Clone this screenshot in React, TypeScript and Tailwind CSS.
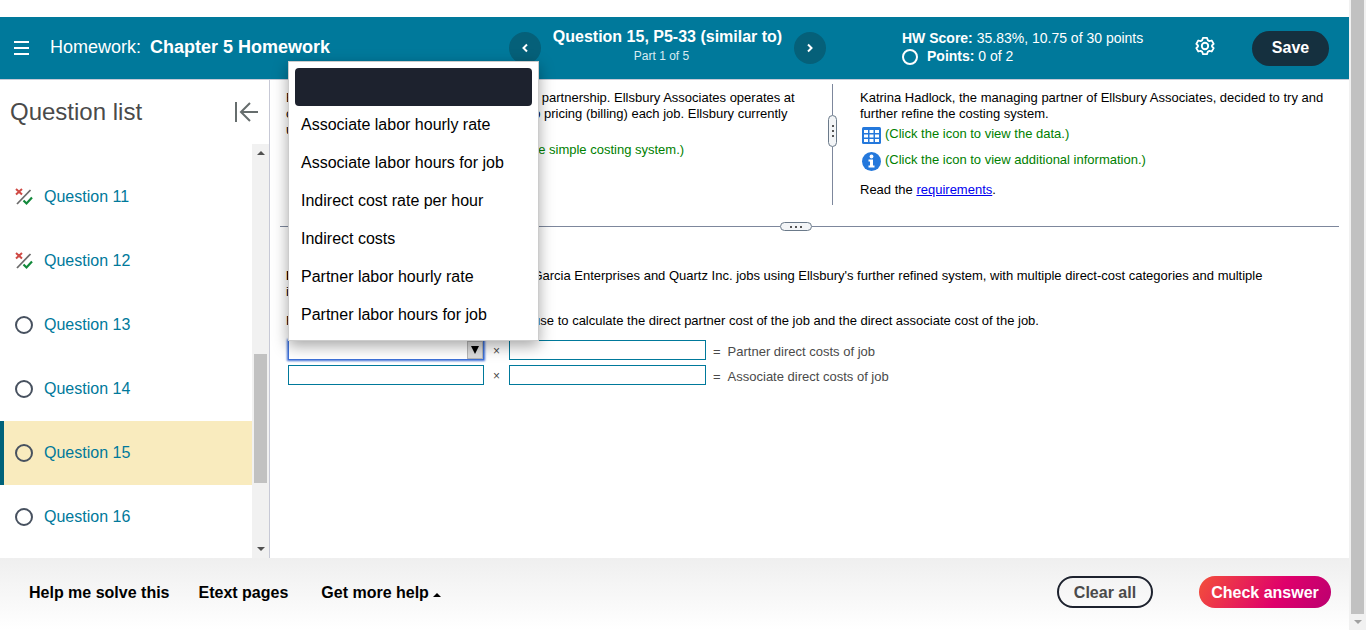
import { useState } from "react";
import type { ReactNode } from "react";

type Status = "mixed" | "open";

const questions: { id: number; status: Status }[] = [
  { id: 11, status: "mixed" },
  { id: 12, status: "mixed" },
  { id: 13, status: "open" },
  { id: 14, status: "open" },
  { id: 15, status: "open" },
  { id: 16, status: "open" },
];

const options = [
  "",
  "Associate labor hourly rate",
  "Associate labor hours for job",
  "Indirect cost rate per hour",
  "Indirect costs",
  "Partner labor hourly rate",
  "Partner labor hours for job",
];

function MixedIcon() {
  return (
    <svg width="18" height="18" viewBox="0 0 18 18" fill="none" aria-hidden="true">
      <path d="M2 16 15.500 2" stroke="#6b6b6b" strokeWidth="1.8" />
      <path d="M1 1l6 5.500M7 1 1 6.500" stroke="#cf4a45" strokeWidth="2" />
      <path d="M8.500 12.500l3 3 5.500-6" stroke="#12893b" strokeWidth="2.200" />
    </svg>
  );
}

function OpenIcon() {
  return (
    <svg width="18" height="18" viewBox="0 0 18 18" fill="none" aria-hidden="true">
      <circle cx="9" cy="9" r="8" stroke="#47515f" strokeWidth="2" />
    </svg>
  );
}

function GearIcon() {
  return (
    <svg width="20" height="20" viewBox="0 0 20 20" fill="none" stroke="#fff" aria-hidden="true">
      <path
        d="M8 1.800h4l.7 2.300 1.700 1 2.300-.6 2 3.400-1.700 1.600v1l1.700 1.600-2 3.400-2.300-.6-1.700 1-.7 2.300H8l-.7-2.300-1.700-1-2.300.6-2-3.400L3 10.500v-1L1.300 7.900l2-3.400 2.300.6 1.700-1z"
        strokeWidth="1.800"
        strokeLinejoin="round"
      />
      <circle cx="10" cy="10" r="3.200" strokeWidth="1.900" />
    </svg>
  );
}

function TableIcon() {
  return (
    <svg width="19" height="17" viewBox="0 0 19 17" aria-hidden="true">
      <rect width="19" height="17" rx="1.500" fill="#2478dc" />
      <g fill="#fff">
        <path d="M2 3h4v3H2zM7.500 3h4v3h-4zM13 3h4v3h-4z" />
        <path d="M2 7.500h4v3H2zM7.500 7.500h4v3h-4zM13 7.500h4v3h-4z" />
        <path d="M2 12h4v3H2zM7.500 12h4v3h-4zM13 12h4v3h-4z" />
      </g>
    </svg>
  );
}

function InfoIcon() {
  return (
    <svg width="19" height="19" viewBox="0 0 19 19" aria-hidden="true">
      <circle cx="9.500" cy="9.500" r="9.500" fill="#2478dc" />
      <circle cx="9.500" cy="4.500" r="1.900" fill="#fff" />
      <path d="M6.500 7.500h4.500v6h1.500V15.500h-6v-2H8v-4H6.500z" fill="#fff" />
    </svg>
  );
}

function NavButton({ label, path }: { label: string; path: string }) {
  return (
    <button
      type="button"
      aria-label={label}
      className="flex h-8 w-8 shrink-0 items-center justify-center rounded-full bg-[#056079]"
    >
      <svg width="8" height="10" viewBox="0 0 8 10" fill="none" aria-hidden="true">
        <path d={path} stroke="#fff" strokeWidth="2" />
      </svg>
    </button>
  );
}

function Header() {
  return (
    <header className="grid h-[63px] grid-cols-[509px_317px_1fr_auto] border-b border-[#c7c9d6] bg-[#00799b] text-white">
      <div className="flex items-center gap-5 pl-3.5">
        <button type="button" aria-label="Menu" className="mr-px">
          <svg width="15" height="14" viewBox="0 0 15 14" aria-hidden="true">
            <path d="M0 1h15M0 7h15M0 13h15" stroke="#fff" strokeWidth="2" />
          </svg>
        </button>
        <h1 className="flex gap-[9px] pb-0.5 text-lg leading-5">
          Homework: <b>Chapter 5 Homework</b>
        </h1>
      </div>
      <div className="flex items-center justify-between">
        <NavButton label="Previous question" path="M6 1.500 2.500 5l3.500 3.500" />
        <div className="pb-1 text-center">
          <h2 className="text-base leading-5 font-bold">Question 15, P5-33 (similar to)</h2>
          <p className="pr-3 text-xs leading-[18px] text-[#d9ecf2]">Part 1 of 5</p>
        </div>
        <NavButton label="Next question" path="M2 1.500l3.500 3.500L2 8.500" />
      </div>
      <div className="pt-3 pl-[76px] text-sm leading-[18px]">
        <p>
          <b>HW Score:</b> 35.83%, 10.75 of 30 points
        </p>
        <p className="flex gap-[9px]">
          <svg width="16" height="16" viewBox="0 0 16 16" fill="none" className="mt-0.5" aria-hidden="true">
            <circle cx="8" cy="8" r="7" stroke="#fff" strokeWidth="2" />
          </svg>
          <span>
            <b>Points:</b> 0 of 2
          </span>
        </p>
      </div>
      <div className="flex items-center gap-[37px] pr-5">
        <button type="button" aria-label="Settings" className="pb-1">
          <GearIcon />
        </button>
        <button type="button" className="h-[35px] w-[77px] rounded-full bg-[#15303f] text-base font-bold">
          Save
        </button>
      </div>
    </header>
  );
}

function Sidebar() {
  return (
    <aside className="flex w-[270px] shrink-0 flex-col border-r border-[#c7c9d6]">
      <div className="flex h-16 items-center justify-between pr-[11px] pl-2.5">
        <h2 className="text-2xl text-[#4a4a4a]">Question list</h2>
        <button type="button" aria-label="Collapse list">
          <svg width="23" height="20" viewBox="0 0 23 20" fill="none" stroke="#666d6d" strokeWidth="2" aria-hidden="true">
            <path d="M1 0v20M23 10H6M15 1 6 10l9 9" />
          </svg>
        </button>
      </div>
      <div className="flex flex-1">
        <ul className="flex-1 pt-[21px]">
          {questions.map((q) => (
            <li key={q.id}>
              <a
                href={`#q${q.id}`}
                className={`flex h-16 items-center gap-[11px] border-l-4 pl-[11px] text-base text-[#00799b] ${
                  q.id === 15 ? "border-[#00627a] bg-[#f9ebbe]" : "border-transparent"
                }`}
              >
                {q.status === "mixed" ? <MixedIcon /> : <OpenIcon />}
                <span>Question {q.id}</span>
              </a>
            </li>
          ))}
        </ul>
        <div className="flex w-[17px] flex-col items-center bg-[#f1f1f1] py-[7px]">
          <svg width="8" height="4" viewBox="0 0 8 4" aria-hidden="true">
            <path d="M0 4l4-4 4 4z" fill="#505050" />
          </svg>
          <div className="mt-[199px] h-[129px] w-[13px] bg-[#c1c1c1]" />
          <svg width="8" height="4" viewBox="0 0 8 4" className="mt-auto" aria-hidden="true">
            <path d="M0 0l4 4 4-4z" fill="#505050" />
          </svg>
        </div>
      </div>
    </aside>
  );
}

function Dots({ vertical = false }: { vertical?: boolean }) {
  return (
    <div
      className={`flex items-center justify-center gap-[3px] rounded-full border border-[#6b7a8a] bg-[#f3f5f7] ${
        vertical ? "h-8 w-[9px] flex-col" : "h-[9px] w-8"
      }`}
    >
      <i className="h-0.5 w-0.5 bg-[#555]" />
      <i className="h-0.5 w-0.5 bg-[#555]" />
      <i className="h-0.5 w-0.5 bg-[#555]" />
    </div>
  );
}

function Equation({ result, name, children }: { result: string; name: string; children: ReactNode }) {
  return (
    <div className="flex h-5 items-center text-[#4a4a4a]">
      {children}
      <span className="w-[25px] pt-0.5 text-center text-xs">×</span>
      <input aria-label={`${name} second factor`} className="h-5 w-[197px] border border-[#00799b] bg-white px-1" />
      <span className="pt-[3px] pl-[7px]">=</span>
      <span className="pt-[3px] pl-[7px]">{result}</span>
    </div>
  );
}

function TermSelect() {
  const [value, setValue] = useState("");
  const [open, setOpen] = useState(true);

  return (
    <div className="relative h-5 w-[196px]">
      <select
        aria-label="Partner first factor"
        value={value}
        onChange={(e) => setValue(e.target.value)}
        className="h-5 w-full appearance-none border border-[#3c6fd6] bg-white px-1 shadow-[0_0_2px_1px_#3c6fd6] outline-none"
      >
        {options.map((o) => (
          <option key={o} value={o}>
            {o}
          </option>
        ))}
      </select>
      <span className="pointer-events-none absolute top-px right-px flex h-[18px] w-4 items-center justify-center border border-[#b5b5b5] bg-[#dcdcdc]">
        <svg width="8" height="8" viewBox="0 0 8 8" aria-hidden="true">
          <path d="M0 0h8L4 8z" fill="#000" />
        </svg>
      </span>
      {open ? (
        <ul
          role="listbox"
          aria-label="Terms"
          className="absolute bottom-[19px] left-0 z-10 w-[251px] border border-[#ccc] bg-white p-1.5 text-base text-black shadow-[0_5px_14px_rgba(0,0,0,0.35)]"
        >
          {options.map((o) => (
            <li
              key={o}
              role="option"
              aria-selected={o === value}
              onClick={() => {
                setValue(o);
                setOpen(false);
              }}
              className={`flex h-[38px] items-center rounded px-1.5 ${o === value ? "bg-[#1d222e]" : ""}`}
            >
              {o}
            </li>
          ))}
        </ul>
      ) : null}
    </div>
  );
}

function Problem() {
  return (
    <section className="flex pt-1">
      <div className="w-[558px] pt-1.5 pl-4">
        <p>
          Ellsbury Associates is a recently formed law partnership. Ellsbury Associates operates at
          <br />
          capacity and uses a cost-based approach to pricing (billing) each job. Ellsbury currently
          <br />
          uses a simple costing system.
        </p>
        <a href="#simple" className="mt-1 flex gap-1 pl-[3px] text-[#008000]">
          <TableIcon />
          (Click the icon to view information on the simple costing system.)
        </a>
      </div>
      <div className="flex h-[121px] w-[9px] flex-col items-center">
        <div className="h-[31px] w-px bg-[#7d879c]" />
        <Dots vertical />
        <div className="w-px flex-1 bg-[#7d879c]" />
      </div>
      <div className="flex-1 pt-1.5 pl-[23px]">
        <p>
          Katrina Hadlock, the managing partner of Ellsbury Associates, decided to try and
          <br />
          further refine the costing system.
        </p>
        <a href="#data" className="mt-1 flex h-[18px] gap-1 pl-0.5 text-[#008000]">
          <span className="pt-px">
            <TableIcon />
          </span>
          (Click the icon to view the data.)
        </a>
        <a href="#info" className="mt-2 flex h-[18px] gap-1 pl-0.5 text-[#008000]">
          <InfoIcon />
          (Click the icon to view additional information.)
        </a>
        <p className="mt-3">
          Read the{" "}
          <a href="#requirements" className="text-[#0000ee] underline">
            requirements
          </a>
          .
        </p>
      </div>
    </section>
  );
}

function Work() {
  return (
    <section className="pt-[37px] pl-4">
      <p>
        <b>Requirement 1.</b> Determine the cost of the Garcia Enterprises and Quartz Inc. jobs using Ellsbury's
        further refined system, with multiple direct-cost categories and multiple
        <br />
        indirect cost pools.
      </p>
      <p className="mt-[13px]">
        First, enter the formula that Ellsbury would use to calculate the direct partner cost of the job and the direct
        associate cost of the job.
      </p>
      <div className="mt-[11px] flex flex-col gap-[5px] pl-0.5">
        <Equation name="Partner" result="Partner direct costs of job">
          <TermSelect />
        </Equation>
        <Equation name="Associate" result="Associate direct costs of job">
          <input aria-label="Associate first factor" className="h-5 w-[196px] border border-[#00799b] bg-white px-1" />
        </Equation>
      </div>
    </section>
  );
}

function Footer() {
  return (
    <footer className="flex h-[72px] items-center justify-between bg-linear-to-b from-[#efefef] to-white pr-[18px] pb-1 pl-[29px] text-base font-bold">
      <nav className="flex pt-0.5">
        <button type="button" className="mr-[29px]">
          Help me solve this
        </button>
        <button type="button" className="mr-[33px]">
          Etext pages
        </button>
        <button type="button" className="flex items-center gap-1">
          Get more help
          <svg width="8" height="4" viewBox="0 0 8 4" className="mt-1" aria-hidden="true">
            <path d="M0 4l4-4 4 4z" />
          </svg>
        </button>
      </nav>
      <div className="flex gap-[46px]">
        <button type="button" className="h-8 w-24 rounded-full border-2 border-[#1d222e] pt-0.5 text-[#4a4a4a]">
          Clear all
        </button>
        <button
          type="button"
          className="h-8 w-[132px] rounded-full bg-[linear-gradient(120deg,#f3503a_0%,#df006b_60%,#bb0070_100%)] pt-0.5 text-white"
        >
          Check answer
        </button>
      </div>
    </footer>
  );
}

export default function App() {
  return (
    <div className="flex min-h-screen bg-white font-['Liberation_Sans',Arial,sans-serif] text-black">
      <div className="flex min-w-0 flex-1 flex-col pt-[17px]">
        <Header />
        <div className="flex flex-1">
          <Sidebar />
          <main className="min-w-0 flex-1 text-[13px] leading-4">
            <Problem />
            <div className="mt-[17px] mr-2.5 ml-2.5 flex items-center">
              <div className="h-px w-[500px] bg-[#7d879c]" />
              <Dots />
              <div className="h-px flex-1 bg-[#7d879c]" />
            </div>
            <Work />
          </main>
        </div>
        <Footer />
      </div>
      <div className="flex w-[17px] flex-col items-center bg-[#f1f1f1]">
        <div className="w-[13px] flex-1 bg-[#c1c1c1]" />
        <div className="flex h-4 items-center">
          <svg width="8" height="4" viewBox="0 0 8 4" aria-hidden="true">
            <path d="M0 0l4 4 4-4z" fill="#a0a0a0" />
          </svg>
        </div>
      </div>
    </div>
  );
}
